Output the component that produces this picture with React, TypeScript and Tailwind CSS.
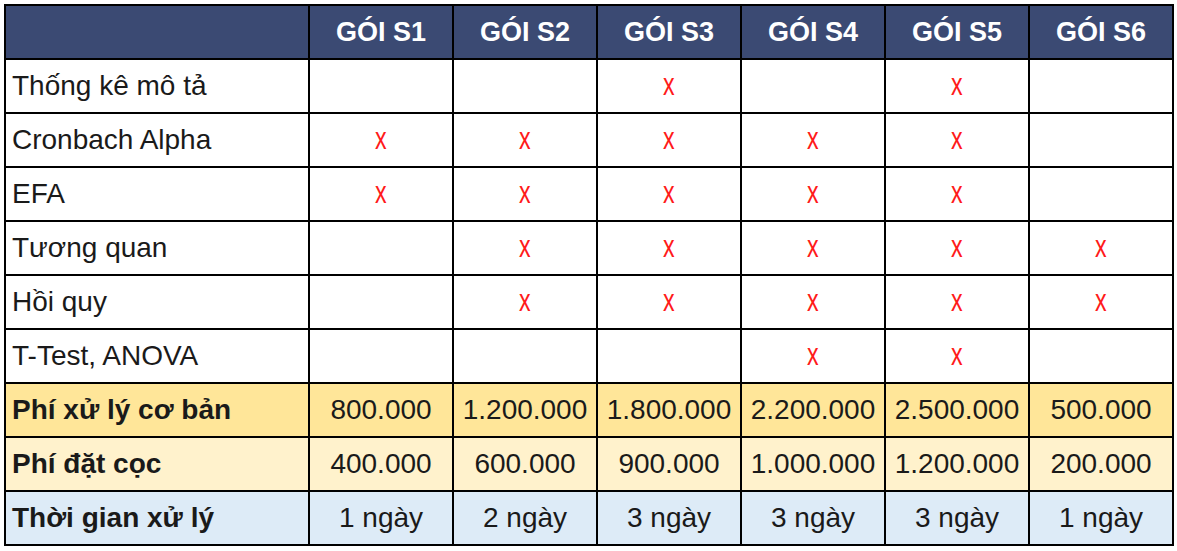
import React from "react";

const packages = ["GÓI S1", "GÓI S2", "GÓI S3", "GÓI S4", "GÓI S5", "GÓI S6"];

const features: { name: string; marks: boolean[] }[] = [
  { name: "Thống kê mô tả", marks: [false, false, true, false, true, false] },
  { name: "Cronbach Alpha", marks: [true, true, true, true, true, false] },
  { name: "EFA", marks: [true, true, true, true, true, false] },
  { name: "Tương quan", marks: [false, true, true, true, true, true] },
  { name: "Hồi quy", marks: [false, true, true, true, true, true] },
  { name: "T-Test, ANOVA", marks: [false, false, false, true, true, false] },
];

const priceRows = [
  {
    name: "Phí xử lý cơ bản",
    bg: "bg-[#ffe699]",
    values: ["800.000", "1.200.000", "1.800.000", "2.200.000", "2.500.000", "500.000"],
  },
  {
    name: "Phí đặt cọc",
    bg: "bg-[#fff2cc]",
    values: ["400.000", "600.000", "900.000", "1.000.000", "1.200.000", "200.000"],
  },
  {
    name: "Thời gian xử lý",
    bg: "bg-[#ddebf7]",
    values: ["1 ngày", "2 ngày", "3 ngày", "3 ngày", "3 ngày", "1 ngày"],
  },
];

const cell = "border-2 border-black h-[54px] p-0";

export default function App() {
  return (
    <div
      className="w-[1177px] h-[551px] bg-white pl-[4px] pt-[4px] text-[#1a1a1a]"
      style={{ fontFamily: '"Liberation Sans", Arial, sans-serif' }}
    >
      <table className="table-fixed border-collapse w-[1170px] text-[28px] leading-none">
        <colgroup>
          <col className="w-[304px]" />
          {packages.map((p) => (
            <col key={p} className="w-[144px]" />
          ))}
        </colgroup>
        <thead>
          <tr className="bg-[#3b4a73]">
            <th className={cell}></th>
            {packages.map((p) => (
              <th key={p} className={`${cell} text-center font-bold text-white text-[27px]`}>
                {p}
              </th>
            ))}
          </tr>
        </thead>
        <tbody>
          {features.map((f) => (
            <tr key={f.name} className="bg-white">
              <td className={`${cell} pl-[6px] text-left`}>{f.name}</td>
              {f.marks.map((m, i) => (
                <td key={i} className={`${cell} text-center`}>
                  {m ? (
                    <span className="inline-block text-[#ff1a1a] text-[31px] scale-x-[0.75] translate-y-[-2px]">
                      x
                    </span>
                  ) : null}
                </td>
              ))}
            </tr>
          ))}
          {priceRows.map((r) => (
            <tr key={r.name} className={r.bg}>
              <td className={`${cell} pl-[6px] text-left font-bold`}>{r.name}</td>
              {r.values.map((v, i) => (
                <td key={i} className={`${cell} text-center`}>
                  {v}
                </td>
              ))}
            </tr>
          ))}
        </tbody>
      </table>
    </div>
  );
}
